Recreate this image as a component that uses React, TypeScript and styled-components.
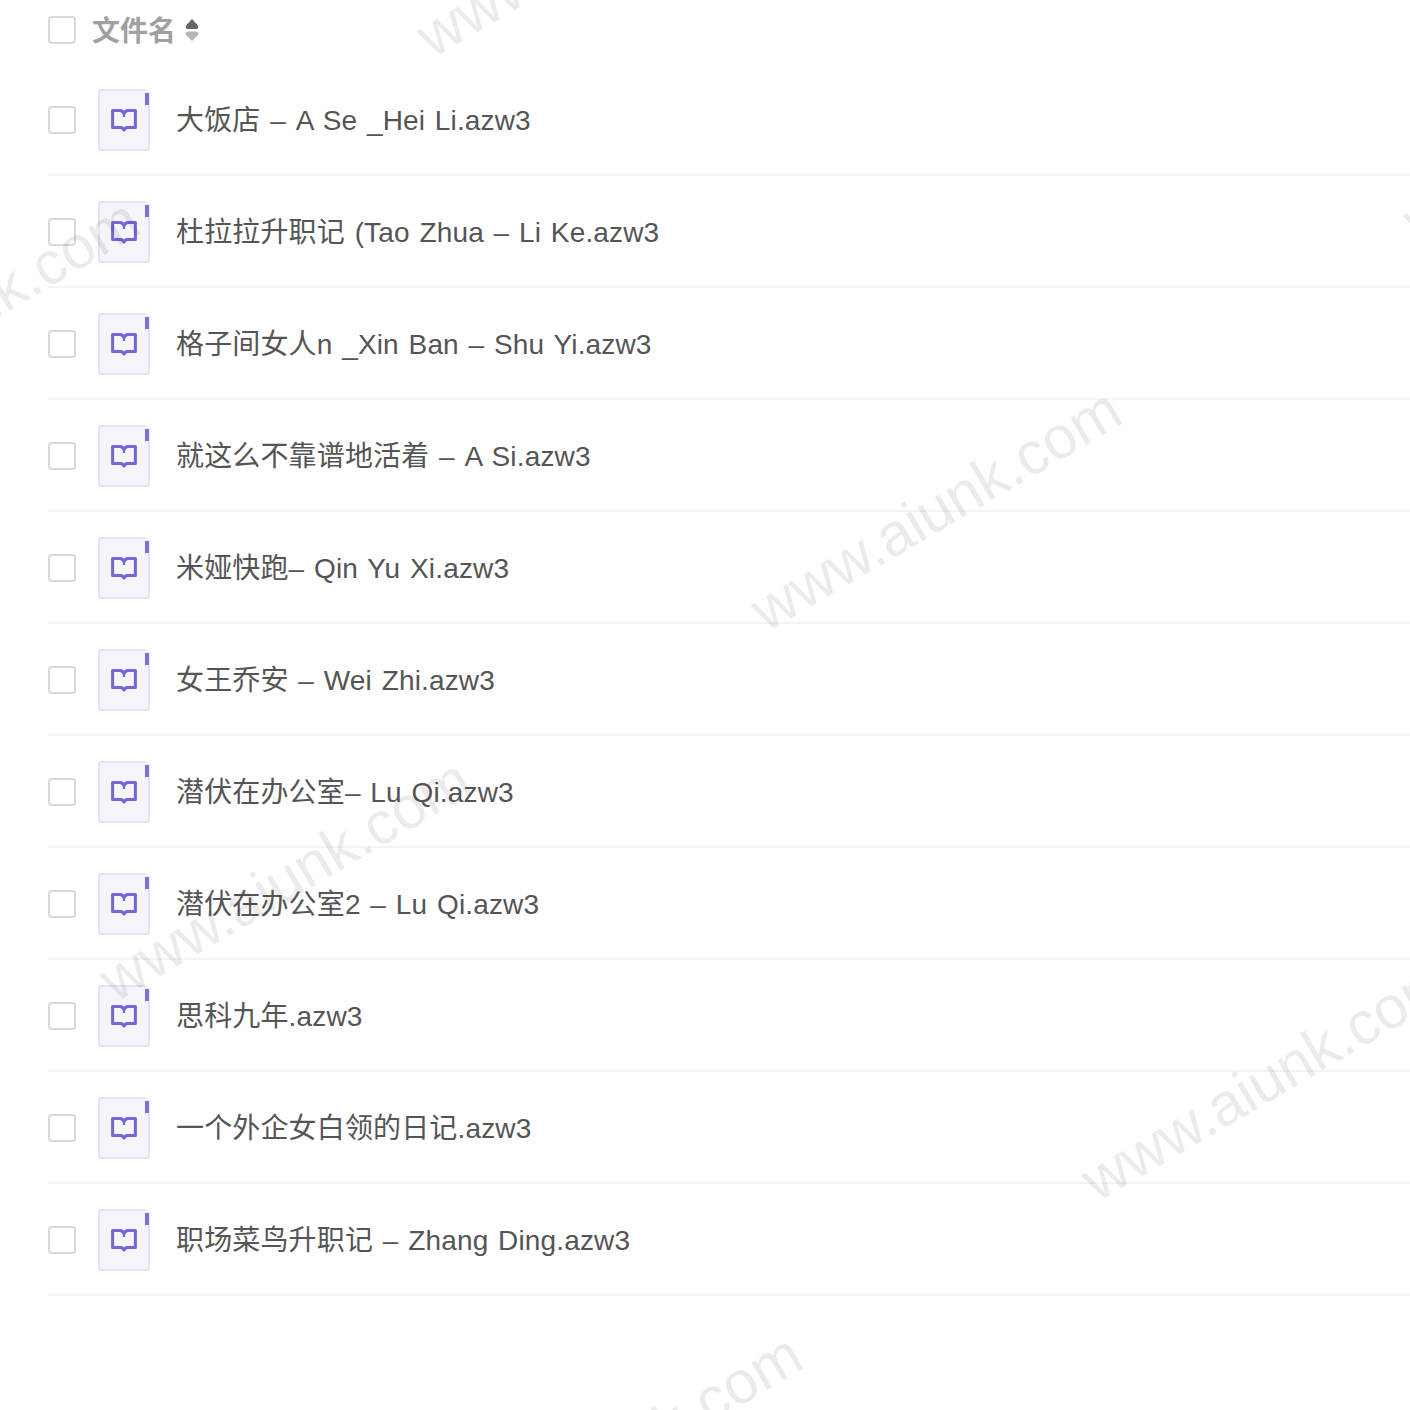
import styled, { createGlobalStyle } from "styled-components";

const GlobalStyle = createGlobalStyle`
  html, body {
    margin: 0;
    background: #fff;
  }
`;

const Page = styled.div`
  position: relative;
  width: 1410px;
  height: 1410px;
  overflow: hidden;
  padding-left: 48px;
  box-sizing: border-box;
  font-family: "Liberation Sans", "Noto Sans CJK SC", sans-serif;
`;

const Header = styled.div`
  display: flex;
  align-items: center;
  height: 60px;
  margin-bottom: 4px;
`;

const HeaderTitle = styled.span`
  margin-left: 16px;
  margin-bottom: 2px;
  font-size: 28px;
  font-weight: 700;
  color: #a0a0a0;
`;

const SortIcon = styled.svg`
  margin-left: 9px;
  width: 14px;
  height: 24px;
`;

const Checkbox = styled.span`
  flex: none;
  width: 28px;
  height: 28px;
  box-sizing: border-box;
  border: 2px solid #d9d9d9;
  border-radius: 4px;
  background: #fff;
`;

const Row = styled.div`
  display: flex;
  align-items: center;
  height: 112px;
  padding-top: 2px;
  box-sizing: border-box;
  border-bottom: 2px solid #f4f4f4;
`;

const FileIcon = styled.div`
  position: relative;
  flex: none;
  display: flex;
  align-items: center;
  justify-content: center;
  width: 52px;
  height: 62px;
  margin-left: 22px;
  box-sizing: border-box;
  border: 2px solid #e6e4f4;
  border-radius: 3px;
  background: #f6f5fc;
  clip-path: polygon(0 0, calc(100% - 5px) 0, 100% 5px, 100% 100%, 0 100%);

  &::after {
    content: "";
    position: absolute;
    top: 2px;
    right: -1px;
    width: 4px;
    height: 12px;
    background: #7b72dc;
  }
`;

const FileName = styled.span`
  margin-left: 26px;
  margin-bottom: 4px;
  font-size: 28px;
  letter-spacing: 0.15px;
  word-spacing: 1.8px;
  color: #555;
  white-space: nowrap;
`;

const Watermark = styled.span<{ $x: number; $y: number }>`
  position: absolute;
  left: ${(props) => props.$x}px;
  top: ${(props) => props.$y}px;
  transform: translate(-50%, -50%) rotate(-30.4deg);
  font-family: "Liberation Sans", sans-serif;
  font-size: 60px;
  line-height: 1;
  color: rgba(0, 0, 0, 0.08);
  white-space: nowrap;
  pointer-events: none;
`;

const files = [
  "大饭店 – A Se _Hei Li.azw3",
  "杜拉拉升职记 (Tao Zhua – Li Ke.azw3",
  "格子间女人n _Xin Ban – Shu Yi.azw3",
  "就这么不靠谱地活着 – A Si.azw3",
  "米娅快跑– Qin Yu Xi.azw3",
  "女王乔安 – Wei Zhi.azw3",
  "潜伏在办公室– Lu Qi.azw3",
  "潜伏在办公室2 – Lu Qi.azw3",
  "思科九年.azw3",
  "一个外企女白领的日记.azw3",
  "职场菜鸟升职记 – Zhang Ding.azw3",
];

const watermarks = [
  [602, -64],
  [1588, 120],
  [-46, 320],
  [936, 510],
  [285, 880],
  [1267, 1080],
  [617, 1455],
];

function BookIcon() {
  return (
    <svg width="26" height="23" viewBox="0 0 26 23" fill="none">
      <path
        d="M1.600 1.600H8.500C10.500 1.600 12.200 2.800 13 4.800C13.800 2.800 15.500 1.600 17.500 1.600H24.400V18.500H16.500C15 18.500 13.700 19.500 13 21C12.300 19.500 11 18.500 9.500 18.500H1.600Z"
        stroke="#7068d8"
        strokeWidth="3"
        strokeLinejoin="round"
      />
      <path d="M13 3V8" stroke="#7068d8" strokeWidth="2.200" />
    </svg>
  );
}

function App() {
  return (
    <>
      <GlobalStyle />
      <Page>
        <Header>
          <Checkbox />
          <HeaderTitle>文件名</HeaderTitle>
          <SortIcon viewBox="0 0 14 24">
            <path d="M7 1L13 7.500Q14 11 11 11H3Q0 11 1 7.500Z" fill="#666" />
            <path d="M7 23L13 17Q14 13.500 11 13.500H3Q0 13.500 1 17Z" fill="#b5b5b5" />
          </SortIcon>
        </Header>
        {files.map((name) => (
          <Row key={name}>
            <Checkbox />
            <FileIcon>
              <BookIcon />
            </FileIcon>
            <FileName>{name}</FileName>
          </Row>
        ))}
        {watermarks.map(([x, y]) => (
          <Watermark key={`${x}-${y}`} $x={x} $y={y}>
            www.aiunk.com
          </Watermark>
        ))}
      </Page>
    </>
  );
}

export default App;
